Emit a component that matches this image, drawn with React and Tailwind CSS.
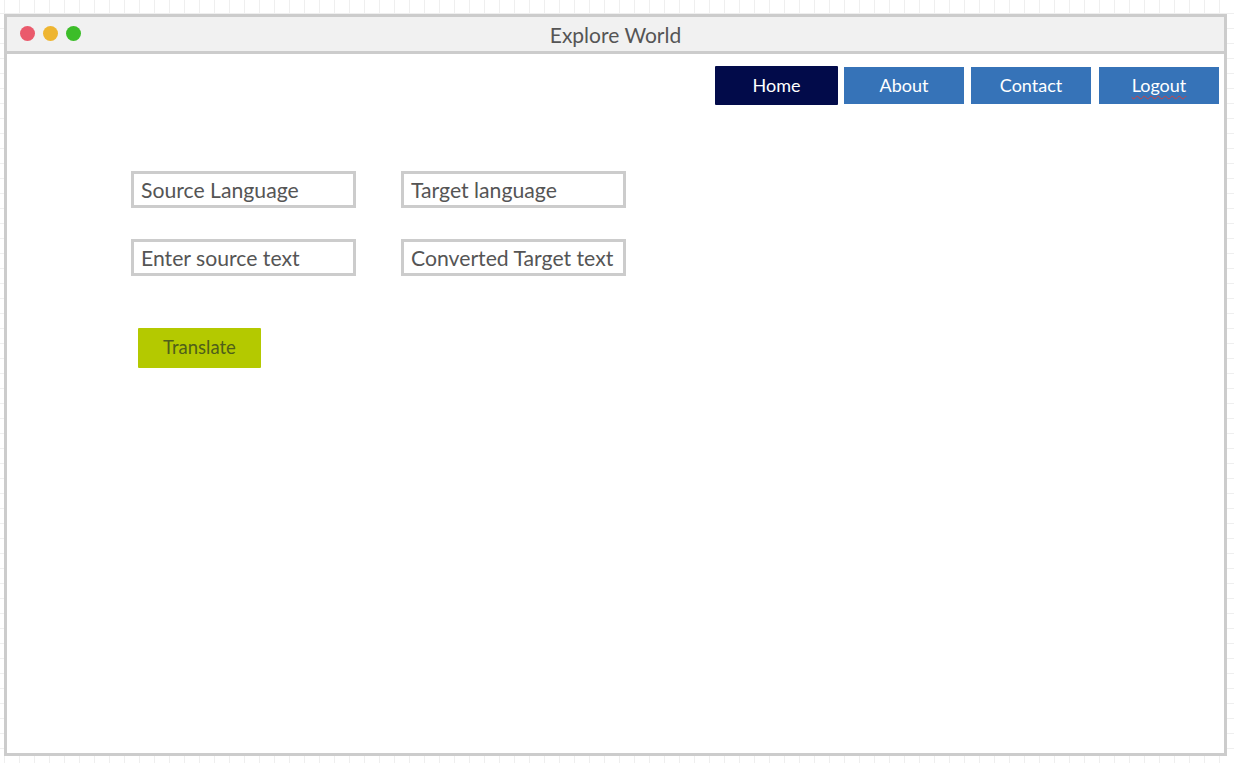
export default function App() {
  return (
    <div
      className="w-[1234px] h-[763px] pt-[14px] pl-[4px] bg-white bg-[linear-gradient(to_right,#efefef_1px,transparent_1px),linear-gradient(to_bottom,#efefef_1px,transparent_1px)] bg-[size:15px_15px] bg-[position:4px_13px] overflow-hidden"
      style={{ fontFamily: "Lato, 'Open Sans', sans-serif" }}
    >
      <div className="w-[1223px] h-[742px] border-[3px] border-[#cccccc] bg-white flex flex-col">
        {/* Title bar */}
        <div className="relative h-[37px] shrink-0 bg-[#f1f1f1] border-b-[3px] border-[#cccccc] flex items-center justify-center">
          <div className="absolute left-[13px] top-[9px] flex gap-[8px]">
            <span className="w-[15px] h-[15px] rounded-full bg-[#ea5a6c]" />
            <span className="w-[15px] h-[15px] rounded-full bg-[#eeb531]" />
            <span className="w-[15px] h-[15px] rounded-full bg-[#3cbd29]" />
          </div>
          <span className="text-[21px] text-[#555555] leading-none">Explore World</span>
        </div>

        {/* Nav */}
        <div className="flex justify-end items-start pr-[5px] mt-[12px]">
          <button className="w-[123px] h-[39px] bg-[#020b4a] text-white text-[18px] rounded-[1px]">Home</button>
          <button className="w-[120px] h-[37px] ml-[6px] mt-[1px] bg-[#3673b8] text-white text-[18px]">About</button>
          <button className="w-[120px] h-[37px] ml-[7px] mt-[1px] bg-[#3673b8] text-white text-[18px]">Contact</button>
          <button className="w-[120px] h-[37px] ml-[8px] mt-[1px] bg-[#3673b8] text-white text-[18px]">
            <span className="underline decoration-wavy decoration-[#d04040] decoration-1 underline-offset-[3px]">Logout</span>
          </button>
        </div>

        {/* Form */}
        <div className="pl-[124px] mt-[66px] flex flex-col">
          <div className="grid grid-cols-[225px_225px] gap-x-[45px] gap-y-[31px]">
            {["Source Language", "Target language", "Enter source text", "Converted Target text"].map((t) => (
              <div
                key={t}
                className="h-[37px] border-[3px] border-[#cccccc] flex items-center pl-[7px] pt-[2px] text-[21.2px] text-[#555555] whitespace-nowrap"
              >
                {t}
              </div>
            ))}
          </div>
          <button className="mt-[52px] ml-[7px] w-[123px] h-[40px] bg-[#b4c900] text-[#4f5f1a] text-[18.5px] rounded-[1px]">
            Translate
          </button>
        </div>
      </div>
    </div>
  );
}
